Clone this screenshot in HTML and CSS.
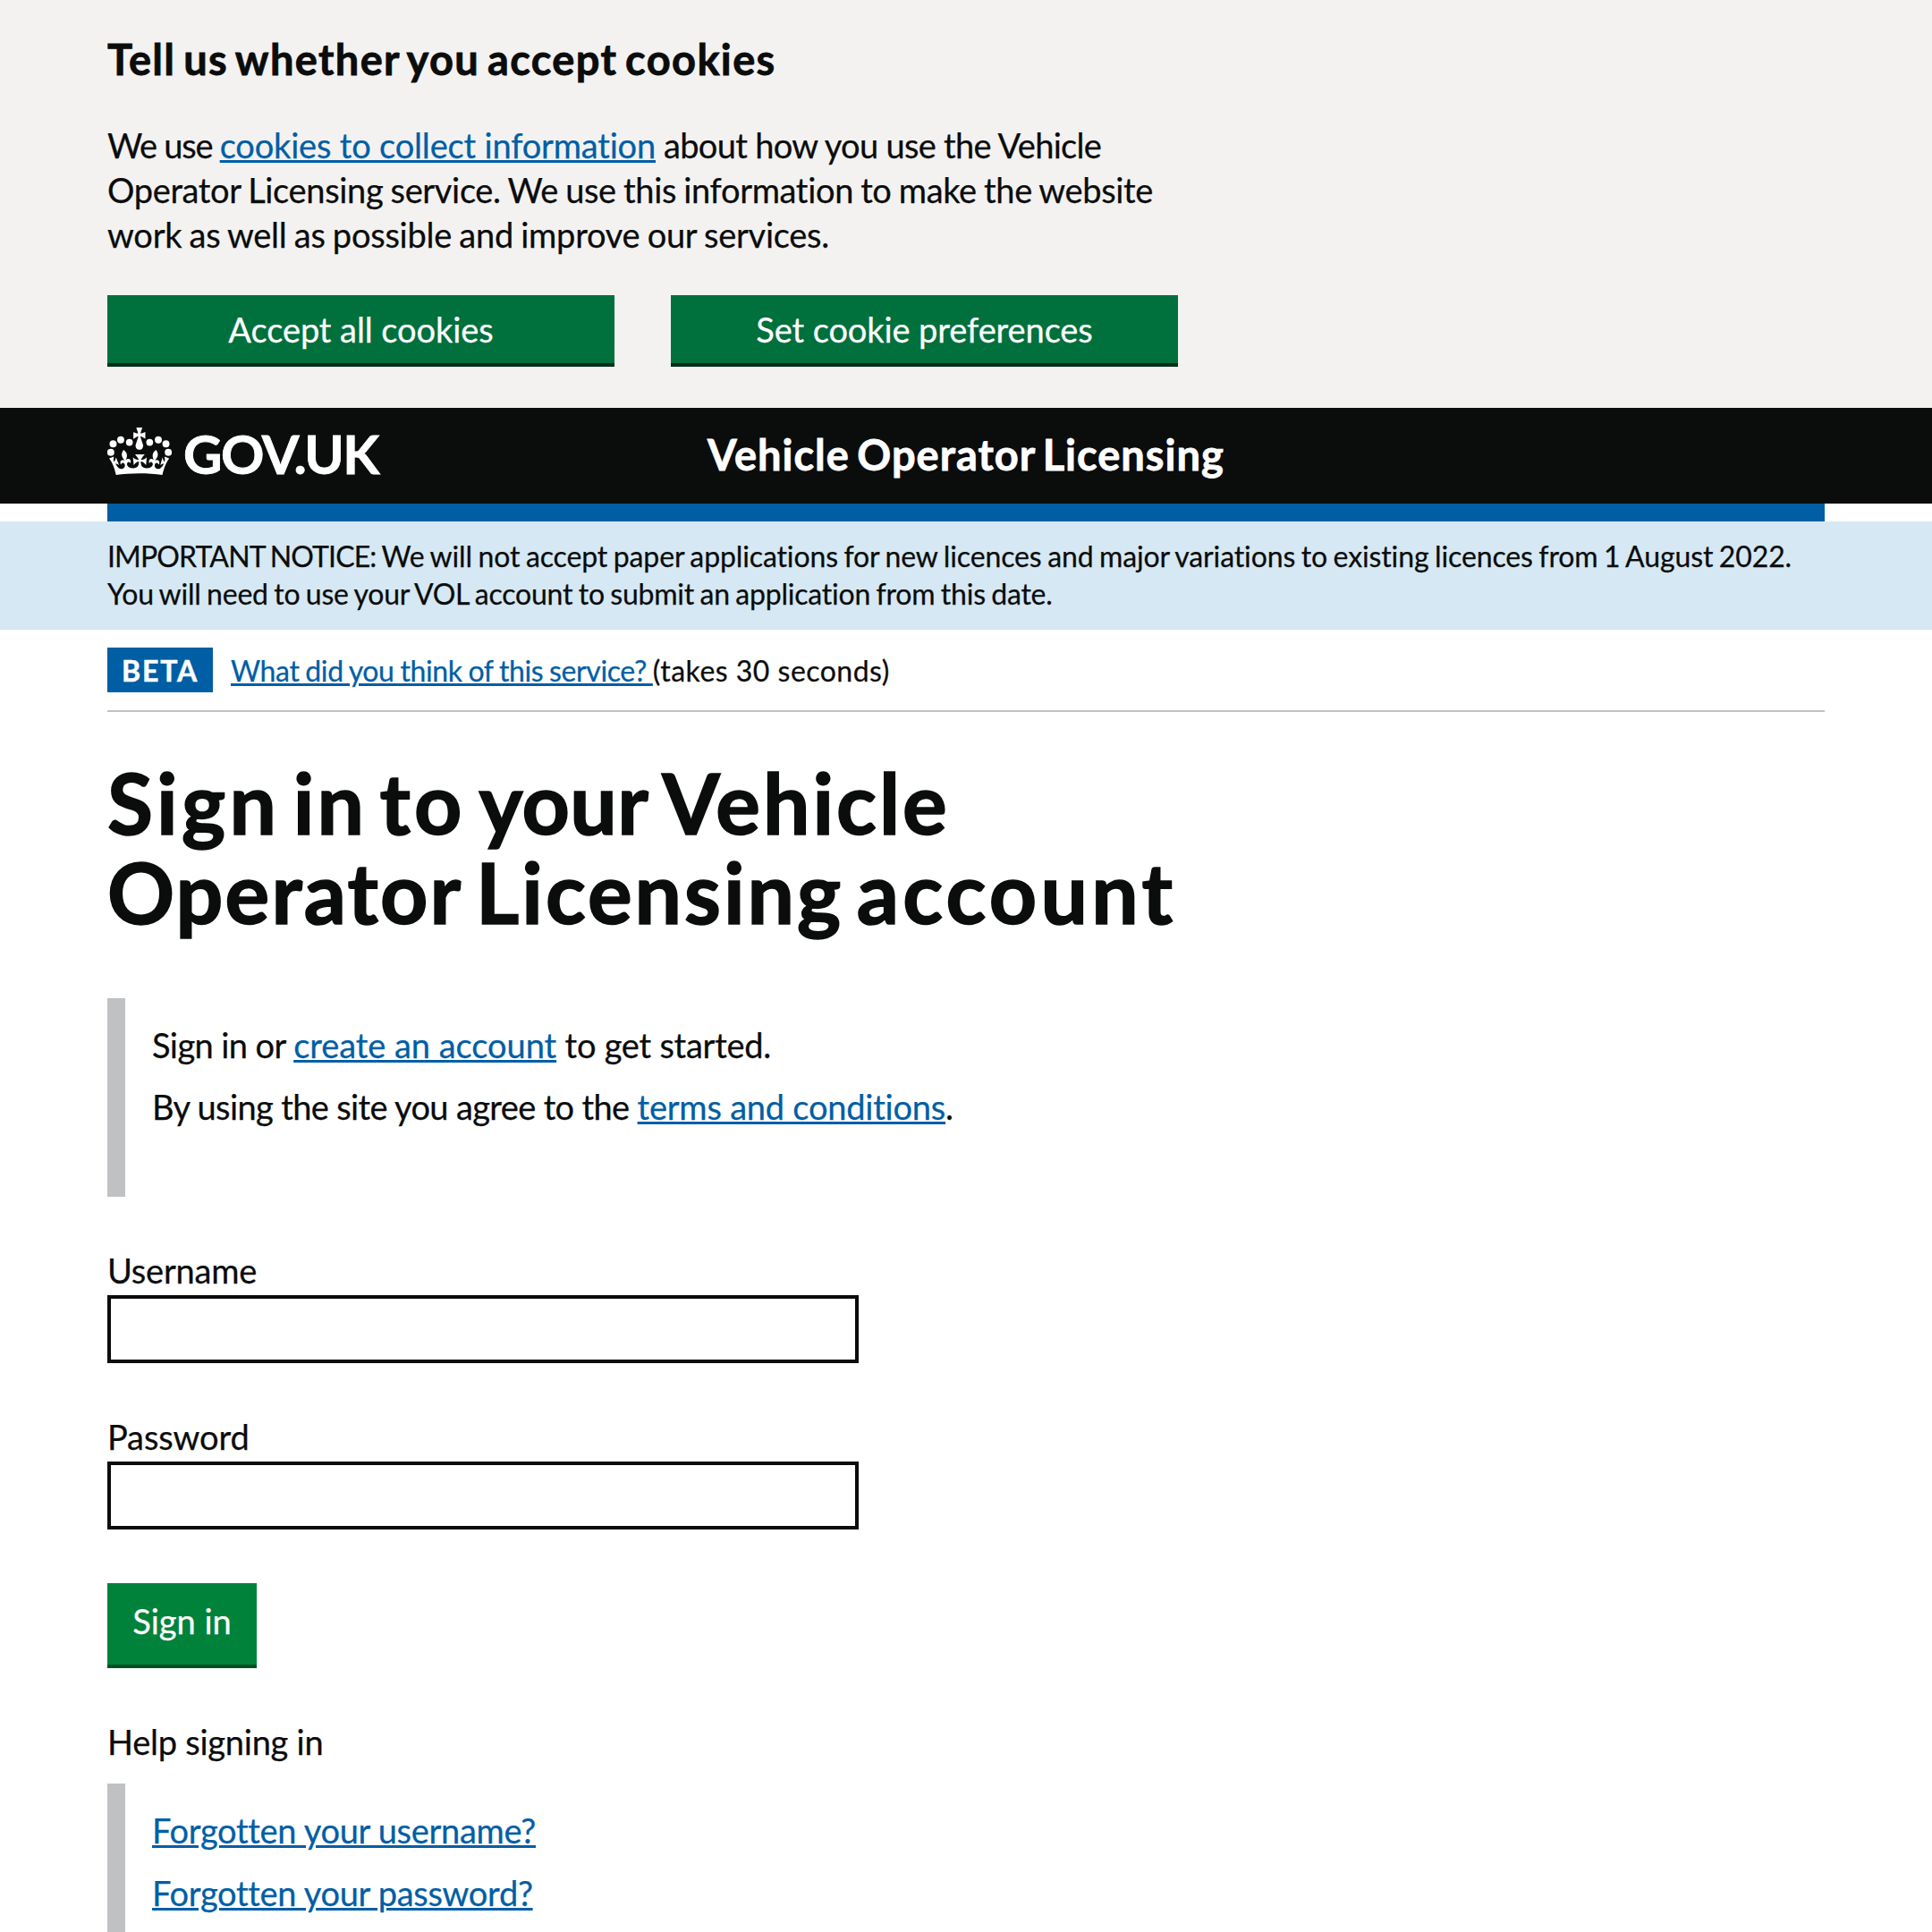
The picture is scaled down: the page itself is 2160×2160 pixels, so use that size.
FILE: index.html
```html
<!DOCTYPE html>
<html lang="en">
<head>
<meta charset="utf-8">
<title>Sign in - Vehicle Operator Licensing</title>
<link rel="stylesheet" href="styles.css">
</head>
<body>
<section class="cookie-banner">
  <div class="container">
    <h2 class="heading-m">Tell us whether you accept cookies</h2>
    <p class="text cookie-text">
      <span class="line"><span class="t-we">We use </span><a class="link t-collect" href="#">cookies to collect information</a><span class="t-about"> about how you use the Vehicle</span></span>
      <span class="line t-line2">Operator Licensing service. We use this information to make the website</span>
      <span class="line t-line3">work as well as possible and improve our services.</span>
    </p>
    <div class="cookie-actions">
      <button class="cookie-button t-accept" type="button">Accept all cookies</button>
      <button class="cookie-button t-prefs" type="button">Set cookie preferences</button>
    </div>
  </div>
</section>
<header class="header">
  <div class="container header-inner">
    <a class="logo" href="#">
      <svg class="crown" viewBox="0.2 4 35.6 26" preserveAspectRatio="none" aria-hidden="true"><g fill="#fff"><circle cx="2.1" cy="17.6" r="1.95"/><circle cx="3.4" cy="13" r="1.95"/><circle cx="7.6" cy="10.7" r="1.95"/><circle cx="12.4" cy="12.1" r="1.9"/><circle cx="33.9" cy="17.6" r="1.95"/><circle cx="32.6" cy="13" r="1.95"/><circle cx="28.4" cy="10.7" r="1.95"/><circle cx="23.6" cy="12.1" r="1.9"/><path d="M18.8 8.8l2.4 1.3V6.5l-2.4.8c-.1-.1-.1-.2-.2-.3s1-3 1-3h-3.4s1 2.9 1 3c-.1.1-.2.2-.2.3l-2.4-.7v3.6L17 8.8c.1.1.2.2.3.3l-1.4 4.2c-.1.2-.1.4-.1.7 0 1.1.8 2.1 1.9 2.2h.6C19.2 16 20 15.1 20 14c0-.2 0-.4-.1-.7l-1.4-4.2c.2-.1.3-.2.3-.3m-1 20.3c4.6 0 8.9.3 12.8.9 1.1-4.6 2.4-7.2 3.8-9.1l-2.6-.9c.3 1.3.3 1.9 0 2.8-.4-.4-.8-1.2-1.1-2.4l-1.2 4.2c.8-.5 1.4-.9 2-.9-1.2 2.6-2.7 3.2-3.6 3-1.2-.2-1.7-1.3-1.5-2.2.3-1.3 1.6-1.6 2.2-.1 1.2-2.4-.8-3.1-2.1-2.4 1.9-1.9 2.2-3.6.6-5.7-2.2 1.7-2.2 3.3-1.2 5.6-1.3-1.5-3.3-.7-2.5 1.7.9-1.4 2.1-.5 1.9.8-.2 1.2-1.7 2.1-3.7 1.9-2.7-.2-2.9-2.1-2.9-3.6.7-.1 1.9.5 2.9 1.9l.4-4.3c-1.1 1.1-2.1 1.4-3.2 1.4.4-1.2 2.1-3 2.1-3h-5.4s1.7 1.9 2.1 3c-1.1 0-2.1-.2-3.2-1.4l.4 4.3c1-1.4 2.2-2 2.9-1.9-.1 1.5-.2 3.4-2.9 3.6-1.9.2-3.5-.7-3.7-1.9-.2-1.3 1-2.2 1.9-.8.7-2.4-1.3-3.1-2.6-1.7 1-2.3 1-4-1.2-5.6-1.6 2.1-1.3 3.8.6 5.7-1.3-.7-3.2 0-2.1 2.4.6-1.5 1.9-1.1 2.2.1.2.9-.4 1.9-1.5 2.2-1 .2-2.5-.5-3.7-3 .7 0 1.3.4 2 .9L5 20.4c-.3 1.2-.7 1.9-1.2 2.4-.3-.8-.2-1.5 0-2.8l-2.6.9C2.7 22.8 4 25.4 5 30c3.8-.5 8.2-.9 12.8-.9"/></g></svg>
      <span class="logo-text">GOV.UK</span>
    </a>
    <span class="product">Vehicle Operator Licensing</span>
  </div>
</header>
<div class="container"><div class="header-bar"></div></div>
<section class="notice">
  <div class="container">
    <span class="line t-notice1"><span class="t-caps">IMPORTANT NOTICE:</span> We will not accept paper applications for new licences and major variations to existing licences from 1 August 2022.</span>
    <span class="line t-notice2">You will need to use your VOL account to submit an application from this date.</span>
  </div>
</section>
<main class="container">
  <div class="phase">
    <strong class="tag">BETA</strong>
    <span class="phase-text"><a class="link t-think" href="#">What did you think of this service? </a><span class="t-takes">(takes 30 seconds)</span></span>
  </div>
  <h1 class="heading-xl"><span class="line"><span class="w-4">Sign</span> <span class="w-3">in</span> <span class="w-4">to</span> <span class="w-1">your</span> <span class="w-3">Vehicle</span></span><span class="line"><span class="w-2">Operator</span> <span class="w-3">Licensing</span> <span class="w-4">account</span></span></h1>
  <div class="inset inset-intro text">
    <p class="para"><span class="t-signor">Sign in or </span><a class="link t-create" href="#">create an account</a><span class="t-start"> to get started.</span></p>
    <p class="para"><span class="t-using">By using the site you agree to the </span><a class="link t-terms" href="#">terms and conditions</a>.</p>
  </div>
  <form class="text">
    <div class="field">
      <label class="label t-username" for="username">Username</label>
      <input class="input" id="username" type="text">
    </div>
    <div class="field">
      <label class="label t-password" for="password">Password</label>
      <input class="input" id="password" type="password">
    </div>
    <button class="submit" type="button">Sign in</button>
  </form>
  <p class="text help">Help signing in</p>
  <div class="inset inset-help text">
    <p class="para"><a class="link t-forgot" href="#">Forgotten your username?</a></p>
    <p class="para"><a class="link t-forgot" href="#">Forgotten your password?</a></p>
  </div>
</main>
</body>
</html>
```
FILE: styles.css
```css
* { box-sizing: border-box; }
html { background: #fff; overflow: hidden; }
body {
  margin: 0;
  height: 2160px;
  overflow: hidden;
  color: #0b0c0c;
  font-family: Lato, "Noto Sans", sans-serif;
  font-variant-ligatures: none;
  -webkit-text-stroke: .25px currentColor;
}
h1, h2, p { margin: 0; }
button { border: 0; color: #fff; font: inherit; font-size: 38px; line-height: 50px; }
.container { width: 1920px; margin: 0 auto; }
.line { display: block; white-space: nowrap; }
.text { font-size: 38px; line-height: 50px; }
.link {
  color: #005ea5;
  -webkit-text-stroke-color: #005ea5;
  text-decoration: underline;
  text-decoration-thickness: 3px;
  text-underline-offset: 2px;
}

.cookie-banner { height: 456px; padding-top: 36px; background: #f3f2f1; }
.heading-m {
  font-size: 47px;
  line-height: 60px;
  font-weight: 700;
  letter-spacing: 1.35px;
  word-spacing: -4px;
  -webkit-text-stroke-width: .8px;
}
.cookie-text { margin-top: 41px; }
.cookie-actions { display: flex; gap: 63px; margin-top: 43px; }
.cookie-button {
  width: 567px;
  height: 76px;
  padding: 13px 0;
  background: #00703c;
  box-shadow: 0 4px 0 #002d18;
}

.header { height: 107px; background: #0b0c0c; color: #fff; }
.header-inner { display: flex; align-items: flex-start; padding-top: 21px; }
.logo { display: flex; width: 671px; color: #fff; text-decoration: none; -webkit-text-stroke: .8px #fff; }
.crown { width: 72px; height: 53px; margin-top: 1px; }
.crown g { stroke: none; }
.logo-text { margin-left: 13px; font-size: 60px; line-height: 60px; font-weight: 700; letter-spacing: -1.5px; }
.product {
  margin-top: 1px;
  font-size: 47px;
  line-height: 60px;
  font-weight: 700;
  letter-spacing: 1px;
  word-spacing: -4px;
  -webkit-text-stroke: .8px #fff;
}
.header-bar { height: 20px; background: #005ea5; }

.notice { height: 121px; padding-top: 18px; background: #d5e8f3; font-size: 32px; line-height: 42px; }
.phase {
  display: flex;
  gap: 20px;
  padding: 20px 0;
  border-bottom: 2px solid #bfc1c3;
  font-size: 32px;
  line-height: 42px;
}
.tag {
  width: 118px;
  height: 50px;
  padding: 5px 0 0 16px;
  background: #005ea5;
  color: #fff;
  letter-spacing: 1.86px;
  -webkit-text-stroke: .5px #fff;
}
.phase-text { padding-top: 5px; white-space: nowrap; }

.heading-xl {
  margin-top: 51px;
  font-size: 93px;
  line-height: 100px;
  font-weight: 700;
  word-spacing: -8px;
  -webkit-text-stroke-width: 1.6px;
}
.inset { border-left: 20px solid #bfc1c3; padding: 27px 0 76px 30px; }
.inset-intro { margin-top: 69px; }
.para + .para { margin-top: 19px; }
.field { padding-top: 57px; }
.label { display: block; margin-bottom: 3px; }
.input { display: block; width: 840px; height: 76px; border: 4px solid #0b0c0c; border-radius: 0; background: #fff; }
.submit {
  display: block;
  width: 167px;
  height: 91px;
  margin-top: 60px;
  padding: 17px 0 24px;
  background: #00823b;
  box-shadow: 0 4px 0 #004f24;
}
.help { margin-top: 61px; letter-spacing: -.25px; }
.inset-help { margin-top: 22px; }
.inset-help .para + .para { margin-top: 20px; }

.t-we { letter-spacing: -1.25px; }
.t-collect { letter-spacing: -.18px; }
.t-about { letter-spacing: -.69px; }
.t-line2 { letter-spacing: -.34px; word-spacing: -1.2px; }
.t-line3 { letter-spacing: -.25px; word-spacing: -1.2px; }
.t-accept { letter-spacing: -.07px; }
.t-prefs { letter-spacing: -.1px; }
.t-notice1 { letter-spacing: -.12px; word-spacing: -1.5px; }
.t-caps { letter-spacing: -.85px; }
.t-notice2 { letter-spacing: -.22px; word-spacing: -1.5px; }
.t-think { letter-spacing: -.38px; word-spacing: -1px; }
.t-takes { letter-spacing: .48px; }
.t-signor { letter-spacing: -.59px; }
.t-create { letter-spacing: -.05px; }
.t-start { letter-spacing: -.25px; }
.t-using { letter-spacing: -.64px; }
.t-terms { letter-spacing: -.22px; }
.t-username { letter-spacing: -.2px; }
.t-password { letter-spacing: -.1px; }
.t-forgot { letter-spacing: -.3px; }
.w-1 { letter-spacing: .5px; }
.w-2 { letter-spacing: 2.2px; }
.w-3 { letter-spacing: 3px; }
.w-4 { letter-spacing: 4.3px; }
```
